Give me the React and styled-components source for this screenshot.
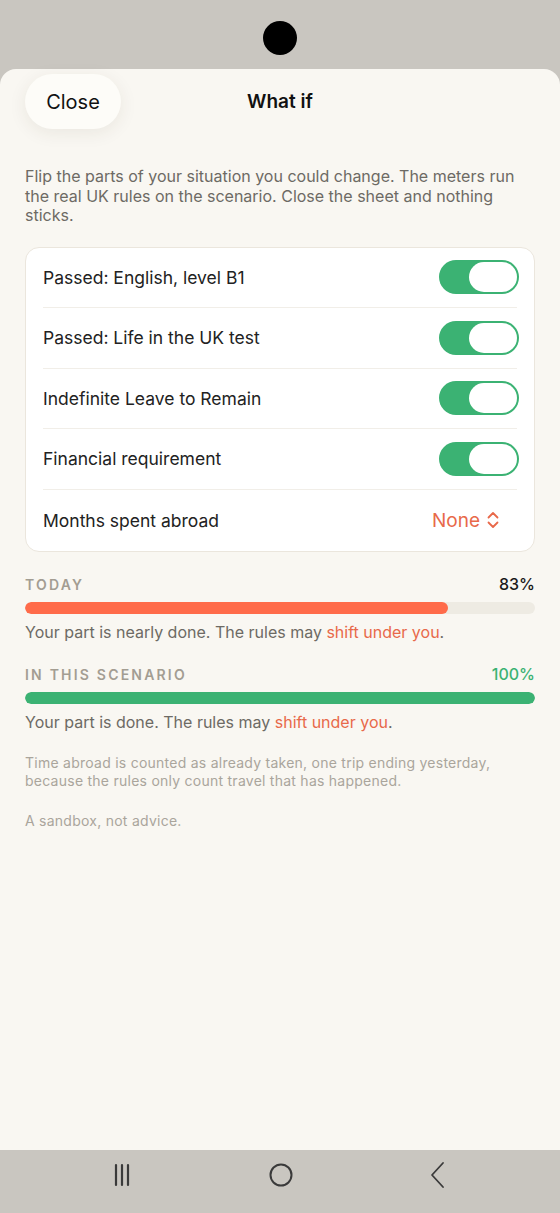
import React, {useState} from 'react'
import styled, {createGlobalStyle} from 'styled-components'

const GlobalStyle = createGlobalStyle`
    *, *::before, *::after {
        box-sizing: border-box;
    }
    html, body {
        margin: 0;
        padding: 0;
        background: #c9c6c0;
    }
    body {
        font-family: Inter, "Noto Sans", "Liberation Sans", sans-serif;
        -webkit-font-smoothing: antialiased;
    }
`

const toggles = [
    'Passed: English, level B1',
    'Passed: Life in the UK test',
    'Indefinite Leave to Remain',
    'Financial requirement',
]

function App() {
    const [on, setOn] = useState(toggles.map(() => true))

    return (
        <Screen>
            <GlobalStyle />
            <StatusBar>
                <Camera />
            </StatusBar>

            <Sheet>
                <Header>
                    <CloseButton>Close</CloseButton>
                    <Title>What if</Title>
                </Header>

                <Intro>
                    Flip the parts of your situation you could change. The meters run
                    the real UK rules on the scenario. Close the sheet and nothing sticks.
                </Intro>

                <Card>
                    {toggles.map((label, i) => (
                        <Row key={label}>
                            <RowLabel>{label}</RowLabel>
                            <Switch
                                $on={on[i]}
                                onClick={() => setOn(on.map((v, j) => (j === i ? !v : v)))}
                            >
                                <Knob $on={on[i]} />
                            </Switch>
                        </Row>
                    ))}
                    <Row>
                        <RowLabel>Months spent abroad</RowLabel>
                        <Picker>
                            None
                            <svg width="14" height="18" viewBox="0 0 14 18" fill="none">
                                <path d="M2.5 6.5 L7 2 L11.5 6.5" stroke="#e8694a" strokeWidth="1.8" strokeLinecap="round" strokeLinejoin="round" />
                                <path d="M2.5 11.5 L7 16 L11.5 11.5" stroke="#e8694a" strokeWidth="1.8" strokeLinecap="round" strokeLinejoin="round" />
                            </svg>
                        </Picker>
                    </Row>
                </Card>

                <Meter>
                    <MeterHead>
                        <MeterLabel>Today</MeterLabel>
                        <MeterValue>83%</MeterValue>
                    </MeterHead>
                    <Track>
                        <Fill $color="#ff6b4a" style={{width: '83%'}} />
                    </Track>
                    <MeterNote>
                        Your part is nearly done. The rules may <Accent>shift under you</Accent>.
                    </MeterNote>
                </Meter>

                <Meter>
                    <MeterHead>
                        <MeterLabel>In this scenario</MeterLabel>
                        <MeterValue $color="#3bb273">100%</MeterValue>
                    </MeterHead>
                    <Track>
                        <Fill $color="#3bb273" style={{width: '100%'}} />
                    </Track>
                    <MeterNote>
                        Your part is done. The rules may <Accent>shift under you</Accent>.
                    </MeterNote>
                </Meter>

                <Footnote>
                    Time abroad is counted as already taken, one trip ending yesterday,
                    because the rules only count travel that has happened.
                </Footnote>
                <Footnote>A sandbox, not advice.</Footnote>
            </Sheet>

            <NavBar>
                <svg width="18" height="24" viewBox="0 0 18 24">
                    <path d="M3 2v20M9 2v20M15 2v20" stroke="#3a3a3a" strokeWidth="2.2" strokeLinecap="round" />
                </svg>
                <svg width="26" height="26" viewBox="0 0 26 26">
                    <circle cx="13" cy="13" r="10.5" stroke="#3a3a3a" strokeWidth="2" fill="none" />
                </svg>
                <svg width="16" height="28" viewBox="0 0 16 28">
                    <path d="M13 2 L2 14 L13 26" stroke="#3a3a3a" strokeWidth="1.8" fill="none" strokeLinecap="round" strokeLinejoin="round" />
                </svg>
            </NavBar>
        </Screen>
    )
}

const Screen = styled.div`
    width: 560px;
    height: 1213px;
    display: flex;
    flex-direction: column;
    background: #c9c6c0;
    overflow: hidden;
`

const StatusBar = styled.div`
    height: 69px;
    flex: none;
    display: flex;
    justify-content: center;
    align-items: center;
`

const Camera = styled.div`
    width: 34px;
    height: 34px;
    border-radius: 50%;
    background: #000;
    margin-top: 6px;
`

const Sheet = styled.div`
    flex: 1;
    background: #f9f7f2;
    border-radius: 16px 16px 0 0;
    padding: 5px 25px 0 25px;
    display: flex;
    flex-direction: column;
`

const Header = styled.div`
    position: relative;
    height: 55px;
    display: flex;
    align-items: center;
`

const CloseButton = styled.button`
    width: 96px;
    height: 55px;
    border: none;
    border-radius: 28px;
    background: #fdfcf8;
    box-shadow: 0 4px 18px rgba(60, 50, 30, 0.08);
    font-family: inherit;
    font-size: 20px;
    color: #111;
    cursor: pointer;
    z-index: 1;
`

const Title = styled.h1`
    position: absolute;
    left: 0;
    right: 0;
    margin: 0;
    text-align: center;
    font-size: 19px;
    font-weight: 600;
    color: #111;
`

const Intro = styled.p`
    margin: 38px 0 21px 0;
    font-size: 16px;
    line-height: 19.5px;
    color: #6d6a64;
`

const Card = styled.div`
    background: #fff;
    border: 1px solid #ebe6dd;
    border-radius: 14px;
    padding: 0 15px 0 17px;
`

const Row = styled.div`
    height: 60.5px;
    display: flex;
    align-items: center;
    justify-content: space-between;
    border-bottom: 1px solid #f1eee8;
    margin-right: 2px;

    &:last-child {
        border-bottom: none;
        height: 61px;
    }
`

const RowLabel = styled.span`
    font-size: 17.5px;
    color: #222;
`

const Switch = styled.button`
    width: 80px;
    height: 34px;
    border: none;
    border-radius: 17px;
    padding: 2px;
    margin-right: -2px;
    background: ${p => (p.$on ? '#3bb273' : '#e4e0d8')};
    display: flex;
    justify-content: ${p => (p.$on ? 'flex-end' : 'flex-start')};
    align-items: center;
    cursor: pointer;
`

const Knob = styled.span`
    width: 48px;
    height: 30px;
    border-radius: 15px;
    background: #fff;
`

const Picker = styled.span`
    display: flex;
    align-items: center;
    gap: 6px;
    margin-right: 17px;
    font-size: 19px;
    color: #e8694a;
`

const Meter = styled.div`
    margin-top: 22px;
    &:first-of-type {
        margin-top: 0;
    }
`

const MeterHead = styled.div`
    display: flex;
    justify-content: space-between;
    align-items: baseline;
    margin-bottom: 8px;
`

const MeterLabel = styled.span`
    font-size: 14px;
    font-weight: 600;
    letter-spacing: 2.2px;
    text-transform: uppercase;
    color: #a39d92;
`

const MeterValue = styled.span`
    font-size: 16px;
    font-weight: 500;
    color: ${p => p.$color || '#1a1a1a'};
`

const Track = styled.div`
    height: 12px;
    border-radius: 6px;
    background: #eeebe3;
    overflow: hidden;
`

const Fill = styled.div`
    height: 100%;
    border-radius: 6px;
    background: ${p => p.$color};
`

const MeterNote = styled.p`
    margin: 8px 0 0 0;
    font-size: 16px;
    line-height: 20px;
    color: #6d6a64;
`

const Accent = styled.span`
    color: #e8694a;
`

const Footnote = styled.p`
    margin: 22px 0 0 0;
    font-size: 14px;
    line-height: 18px;
    letter-spacing: 0.25px;
    color: #aaa59c;
`

const NavBar = styled.div`
    height: 63px;
    flex: none;
    display: flex;
    align-items: center;
    justify-content: space-between;
    padding: 0 114px 14px 113px;
`

export default App
